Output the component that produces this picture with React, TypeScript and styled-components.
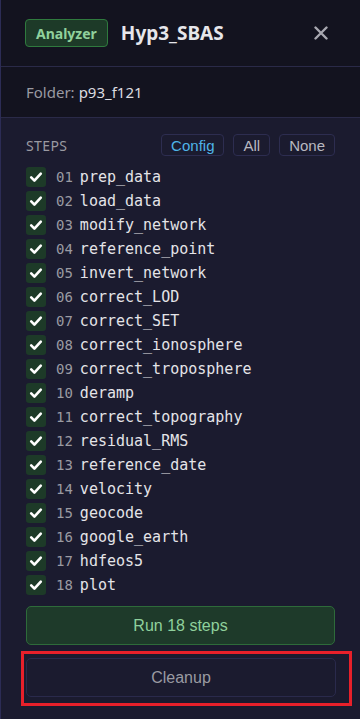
import React from "react";
import styled, { createGlobalStyle } from "styled-components";

const Global = createGlobalStyle`
  html, body { margin: 0; padding: 0; background: #1b1b2f; }
  * { box-sizing: border-box; }
`;

const Panel = styled.div`
  width: 360px;
  height: 719px;
  background: #1b1b2f;
  border-left: 1px solid #2c2c55;
  display: flex;
  flex-direction: column;
  font-family: "Noto Sans", "Open Sans", sans-serif;
  overflow: hidden;
`;

const Header = styled.div`
  height: 67px;
  background: #13131f;
  border-bottom: 1px solid #2a2a48;
  display: flex;
  align-items: center;
  padding: 0 32px 0 24px;
  gap: 13px;
`;

const Badge = styled.span`
  display: inline-flex;
  align-items: center;
  height: 28px;
  padding: 0 10px;
  border: 1px solid #2f7a3e;
  border-radius: 4px;
  background: #1d3a28;
  color: #90d09c;
  font-weight: 700;
  font-size: 14px;
`;

const Title = styled.h1`
  margin: 0;
  flex: 1;
  color: #e6e6ea;
  font-size: 19px;
  font-weight: 700;
`;

const Close = styled.button`
  border: none;
  background: none;
  padding: 0;
  color: #a8a8b0;
  display: flex;
  cursor: pointer;
`;

const FolderRow = styled.div`
  height: 51px;
  background: #13131f;
  border-bottom: 1px solid #2a2a48;
  display: flex;
  align-items: center;
  padding: 0 25px;
  font-size: 15px;
  color: #9a9aa2;
`;

const FolderName = styled.span`
  color: #dcdce0;
  margin-left: 4px;
`;

const Body = styled.div`
  padding: 16px 25px 0 25px;
  display: flex;
  flex-direction: column;
`;

const StepsHead = styled.div`
  display: flex;
  align-items: center;
  height: 22px;
  margin-bottom: 9px;
`;

const StepsLabel = styled.span`
  flex: 1;
  color: #9a9aa2;
  font-size: 14px;
  letter-spacing: 0.4px;
`;

const SmallBtn = styled.button<{ $accent?: boolean }>`
  height: 22px;
  padding: 0 9px;
  margin-left: 9px;
  border: 1px solid #2d2d50;
  border-radius: 4px;
  background: #1b1b2f;
  color: ${(p) => (p.$accent ? "#4fb4e8" : "#b8b8c0")};
  font-family: "Liberation Sans", Arial, sans-serif;
  font-size: 15px;
`;

const StepList = styled.div`
  display: flex;
  flex-direction: column;
`;

const StepRow = styled.label`
  height: 24px;
  display: flex;
  align-items: center;
  font-family: "DejaVu Sans Mono", monospace;
`;

const Check = styled.span`
  width: 20px;
  height: 20px;
  border-radius: 3px;
  background: #1d3a28;
  display: flex;
  align-items: center;
  justify-content: center;
  margin-right: 10px;
`;

const Num = styled.span`
  color: #9a9aa2;
  font-size: 14px;
  margin-right: 7px;
`;

const Name = styled.span`
  color: #e4e4e8;
  font-size: 15px;
`;

const RunBtn = styled.button`
  margin-top: 9px;
  height: 39px;
  border: 1px solid #2e6b3a;
  border-radius: 5px;
  background: #1e3a2a;
  color: #8fd09c;
  font-family: "Liberation Sans", Arial, sans-serif;
  font-size: 16px;
`;

const Highlight = styled.div`
  margin: 6px -5px 0 -5px;
  border: 3px solid #e8202a;
  padding: 4px 12px 6px 2px;
  width: 331px;
`;

const CleanBtn = styled.button`
  width: 310px;
  height: 39px;
  border: 1px solid #2a2a4c;
  border-radius: 5px;
  background: #1b1b2f;
  color: #9a9aa2;
  font-family: "Liberation Sans", Arial, sans-serif;
  font-size: 16px;
`;

const steps = [
  "prep_data",
  "load_data",
  "modify_network",
  "reference_point",
  "invert_network",
  "correct_LOD",
  "correct_SET",
  "correct_ionosphere",
  "correct_troposphere",
  "deramp",
  "correct_topography",
  "residual_RMS",
  "reference_date",
  "velocity",
  "geocode",
  "google_earth",
  "hdfeos5",
  "plot",
];

const CheckIcon = () => (
  <svg width="14" height="14" viewBox="0 0 14 14">
    <path d="M2.2 7.4 L5.4 10.6 L11.8 3.6" fill="none" stroke="#fff" strokeWidth="2.6" strokeLinecap="round" strokeLinejoin="round" />
  </svg>
);

export default function App() {
  return (
    <>
      <Global />
      <Panel>
        <Header>
          <Badge>Analyzer</Badge>
          <Title>Hyp3_SBAS</Title>
          <Close aria-label="close">
            <svg width="14" height="14" viewBox="0 0 14 14">
              <path d="M1.5 1.5 L12.5 12.5 M12.5 1.5 L1.5 12.5" stroke="#a8a8b0" strokeWidth="2.4" strokeLinecap="round" />
            </svg>
          </Close>
        </Header>
        <FolderRow>
          Folder:<FolderName>p93_f121</FolderName>
        </FolderRow>
        <Body>
          <StepsHead>
            <StepsLabel>STEPS</StepsLabel>
            <SmallBtn $accent>Config</SmallBtn>
            <SmallBtn>All</SmallBtn>
            <SmallBtn>None</SmallBtn>
          </StepsHead>
          <StepList>
            {steps.map((s, i) => (
              <StepRow key={s}>
                <Check>
                  <CheckIcon />
                </Check>
                <Num>{String(i + 1).padStart(2, "0")}</Num>
                <Name>{s}</Name>
              </StepRow>
            ))}
          </StepList>
          <RunBtn>Run 18 steps</RunBtn>
          <Highlight>
            <CleanBtn>Cleanup</CleanBtn>
          </Highlight>
        </Body>
      </Panel>
    </>
  );
}
